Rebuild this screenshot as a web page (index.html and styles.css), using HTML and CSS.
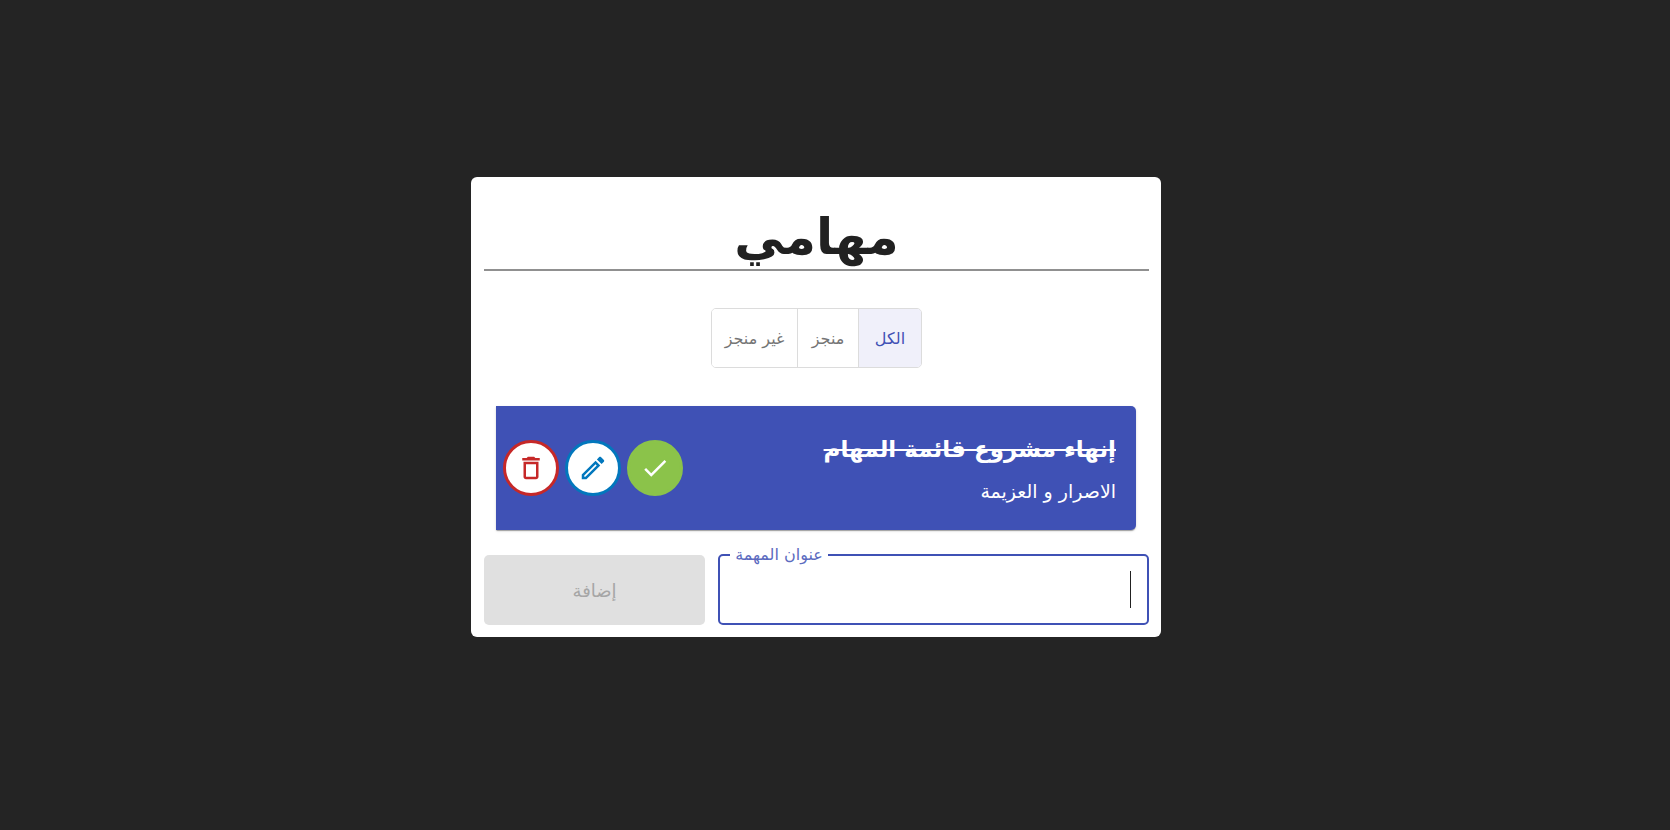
FILE: index.html
```html
<!DOCTYPE html>
<html lang="ar" dir="rtl">
<head>
<meta charset="utf-8">
<meta name="viewport" content="width=device-width, initial-scale=1">
<title>مهامي</title>
<link rel="stylesheet" href="styles.css">
</head>
<body>
<main class="card">
  <h1 class="title">مهامي</h1>
  <div class="filters" role="group" aria-label="مهامي">
    <button type="button" class="filter filter-active" aria-pressed="true">الكل</button>
    <button type="button" class="filter" aria-pressed="false">منجز</button>
    <button type="button" class="filter" aria-pressed="false">غير منجز</button>
  </div>
  <article class="task">
    <div class="task-text">
      <h2 class="task-title">إنهاء مشروع قائمة المهام</h2>
      <p class="task-details">الاصرار و العزيمة</p>
    </div>
    <div class="actions">
      <button type="button" class="action action-done" aria-label="منجز"><svg class="icon" viewBox="0 0 24 24"><path d="M9 16.17 4.83 12l-1.42 1.41L9 19 21 7l-1.41-1.41z"/></svg></button>
      <button type="button" class="action action-edit" aria-label="تعديل"><svg class="icon" viewBox="0 0 24 24"><path d="m14.06 9.02.92.92L5.92 19H5v-.92l9.06-9.06M17.66 3c-.25 0-.51.1-.7.29l-1.83 1.83 3.75 3.75 1.83-1.83c.39-.39.39-1.02 0-1.41l-2.34-2.34c-.2-.2-.45-.29-.71-.29zm-3.6 3.19L3 17.25V21h3.75L17.81 9.94l-3.75-3.75z"/></svg></button>
      <button type="button" class="action action-delete" aria-label="حذف"><svg class="icon" viewBox="0 0 24 24"><path d="M6 19c0 1.1.9 2 2 2h8c1.1 0 2-.9 2-2V7H6v12zM8 9h8v10H8V9zm7.500-5-1-1h-5l-1 1H5v2h14V4z"/></svg></button>
    </div>
  </article>
  <form class="add-form">
    <div class="field">
      <label class="field-label" for="task-name">عنوان المهمة</label>
      <input class="field-input" id="task-name" type="text">
      <span class="caret" aria-hidden="true"></span>
    </div>
    <button type="submit" class="add" disabled>إضافة</button>
  </form>
</main>
</body>
</html>
```
FILE: styles.css
```css
* { box-sizing: border-box; }
body {
  margin: 0;
  min-height: 100vh;
  padding: 0 38px 16px 0;
  display: flex;
  align-items: center;
  justify-content: center;
  background: #242424;
  color: #212121;
  font-family: "DejaVu Sans", sans-serif;
}
button, input { font: inherit; }
.card {
  width: 100%;
  max-width: 690px;
  padding: 12px 12px 12px 13px;
  background: #fff;
  border-radius: 6px;
}
.title {
  margin: 0 0 37px;
  height: 82px;
  padding-top: 14px;
  border-bottom: 2px solid #909090;
  font-size: 50px;
  line-height: 68px;
  text-align: center;
}
.filters {
  display: grid;
  grid-template-columns: 62px 61px 86px;
  width: max-content;
  margin: 0 auto 38px;
  border: 1px solid #dcdcdc;
  border-radius: 5px;
  overflow: hidden;
}
.filter {
  height: 58px;
  padding: 0;
  border: 0;
  border-right: 1px solid #dcdcdc;
  background: #fff;
  color: #757575;
  font-size: 16px;
}
.filter-active {
  border-right: 0;
  background: #f0f0fa;
  color: #3f51b5;
}
.task {
  display: flex;
  align-items: center;
  justify-content: space-between;
  min-height: 124px;
  margin: 0 13px 24px 12px;
  padding: 0 20px 0 7px;
  border-radius: 0 5px 5px 0;
  background: #3f51b5;
  color: #fff;
  box-shadow: 0 2px 1px -1px rgba(0, 0, 0, .2), 0 1px 1px rgba(0, 0, 0, .14), 0 1px 3px rgba(0, 0, 0, .12);
}
.task-text { padding-top: 2px; }
.task-title {
  margin: 0;
  font-size: 23px;
  line-height: 44px;
  text-decoration: line-through;
}
.task-details {
  margin: 0;
  font-size: 19px;
  line-height: 40px;
}
.actions { display: flex; gap: 6px; }
.action {
  display: grid;
  place-items: center;
  width: 56px;
  height: 56px;
  padding: 0;
  border: 3px solid currentColor;
  border-radius: 50%;
  background: #fff;
}
.action-done { color: #fff; background: #8bc34a; border-color: #8bc34a; }
.action-edit { color: #0277bd; }
.action-delete { color: #c62828; }
.icon { width: 30px; height: 30px; fill: currentColor; }
.add-form {
  display: grid;
  grid-template-columns: 431fr 221fr;
  gap: 13px;
}
.field { position: relative; }
.field-input {
  display: block;
  width: 100%;
  height: 71px;
  padding: 0 18px;
  border: 2px solid #3f51b5;
  border-radius: 5px;
  outline: 0;
  background: #fff;
}
.field-label {
  position: absolute;
  top: -11px;
  left: 12px;
  width: 98px;
  background: #fff;
  color: #5c6bc0;
  font-size: 16px;
  line-height: 24px;
  text-align: center;
}
.caret {
  position: absolute;
  top: 17px;
  right: 18px;
  width: 1px;
  height: 37px;
  background: #212121;
}
.add {
  margin-top: 1px;
  border: 0;
  border-radius: 5px;
  background: #e0e0e0;
  color: #a6a6a6;
  font-size: 18px;
}
```
